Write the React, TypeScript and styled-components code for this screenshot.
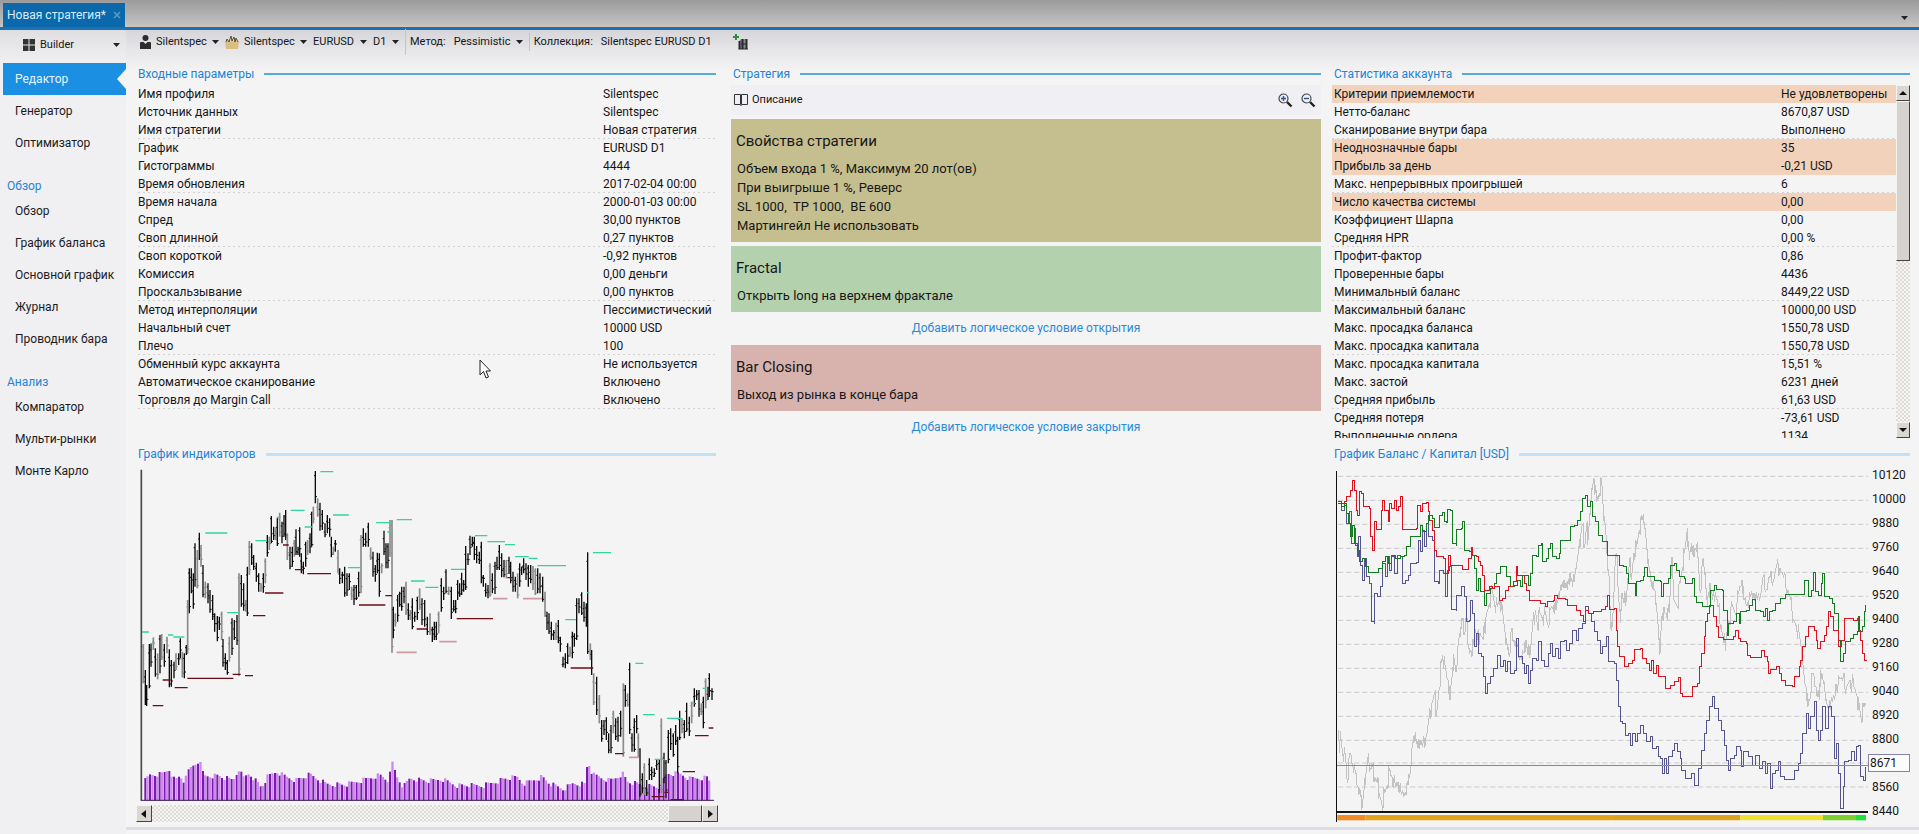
import React from "react";
import styled, { createGlobalStyle } from "styled-components";

const GlobalStyle = createGlobalStyle`
  *, *::before, *::after { box-sizing: border-box; }
  html, body { margin: 0; padding: 0; }
  body {
    background: #f4f4f5;
    color: #161616;
    font-family: Roboto, "Open Sans", sans-serif;
    font-size: 12px;
    line-height: 18px;
  }
  button, select { font: inherit; color: inherit; }
`;

/* ---------- window frame ---------- */

const Page = styled.div`
  display: flex;
  flex-direction: column;
  min-height: 100vh;
`;

const TabStrip = styled.header`
  display: flex;
  justify-content: space-between;
  align-items: flex-end;
  height: 30px;
  padding: 0 11px 0 3px;
  background: linear-gradient(#9b9b9d, #c0c0c1 24px, #d3c2b8 26px);
  border-bottom: 3px solid #1a71b4;
`;

const Tab = styled.div`
  display: flex;
  align-items: center;
  justify-content: space-between;
  width: 122px;
  height: 24px;
  padding: 0 4px;
  background: #0b68ab;
  color: #d6ecfa;
`;

const TabClose = styled.button`
  display: flex;
  padding: 0;
  border: 0;
  background: none;
  color: #5a9cc9;
`;

const StripMenu = styled.button`
  display: flex;
  padding: 0 0 7px;
  border: 0;
  background: none;
`;

const Body = styled.div`
  display: flex;
  flex: 1;
  background: linear-gradient(#d6d6da, #e6e5e8 20px, #f4f4f5 42px);
`;

const Sidebar = styled.aside`
  flex: 0 0 126px;
  padding: 2px 0 0 3px;
  background: linear-gradient(#dfdfe2, #f0eff2 34px);
`;

const Workspace = styled.div`
  flex: 1;
  min-width: 0;
  display: flex;
  flex-direction: column;
`;

/* ---------- drop-downs ---------- */

const PickerLabel = styled.label<{ $wide?: boolean }>`
  display: flex;
  align-items: center;
  gap: 5px;
  height: 26px;
  ${(p) => p.$wide && "padding: 0 6px 0 20px; margin-bottom: 5px;"}
`;

const PickerSelect = styled.select<{ $grow?: boolean }>`
  appearance: none;
  border: 0;
  padding: 0;
  background: transparent;
  outline: 0;
  font-size: 11px;
  ${(p) => p.$grow && "flex: 1; min-width: 0;"}
`;

const Caret = () => (
  <svg width="7" height="4" viewBox="0 0 7 4" aria-hidden="true">
    <path d="M0 0h7L3.500 4z" fill="#222" />
  </svg>
);

function Picker({ name, value, icon, wide }: { name: string; value: string; icon?: React.ReactNode; wide?: boolean }) {
  return (
    <PickerLabel $wide={wide}>
      {icon}
      <PickerSelect aria-label={name} defaultValue={value} $grow={wide}>
        <option>{value}</option>
      </PickerSelect>
      <Caret />
    </PickerLabel>
  );
}

/* ---------- sidebar ---------- */

const NavHeading = styled.h2`
  margin: 18px 0 0 4px;
  color: #1f84d0;
  font-size: 12px;
  font-weight: 400;
  line-height: 18px;
`;

const NavItem = styled.a<{ $active?: boolean }>`
  position: relative;
  display: flex;
  align-items: center;
  height: 32px;
  padding-left: 12px;
  text-decoration: none;
  color: ${(p) => (p.$active ? "#e4f5ff" : "#1c1c1c")};
  background: ${(p) => (p.$active ? "#1b90e3" : "transparent")};
  &::after {
    content: "";
    display: ${(p) => (p.$active ? "block" : "none")};
    position: absolute;
    right: 0;
    top: 6px;
    border: 10px solid transparent;
    border-left-width: 0;
    border-right: 9px solid #f4f4f5;
  }
`;

/* ---------- toolbar ---------- */

const Toolbar = styled.div`
  display: flex;
  align-items: center;
  gap: 6px;
  height: 24px;
  padding: 0 0 0 14px;
  font-size: 11px;
`;

const Group = styled.div`
  display: flex;
  align-items: center;
  gap: 8px;
  padding-left: 4px;
  border-left: 1px solid #c4c4c8;
`;

const AddButton = styled.button`
  display: flex;
  padding: 0;
  margin-left: 13px;
  border: 0;
  background: none;
`;

/* ---------- panels ---------- */

const Panels = styled.main`
  display: grid;
  grid-template-columns: minmax(0, 582fr) minmax(0, 590fr) minmax(0, 578fr);
  column-gap: 11px;
  padding: 9px 9px 0 12px;
  margin-bottom: 4px;
`;

const Column = styled.div<{ $inset?: boolean }>`
  position: relative;
  padding-right: ${(p) => (p.$inset ? 4 : 0)}px;
`;

const SectionTitle = styled.h3<{ $soft?: boolean; $pad?: boolean }>`
  display: flex;
  align-items: center;
  gap: 10px;
  margin: 0;
  padding-left: ${(p) => (p.$pad ? 2 : 0)}px;
  height: 22px;
  color: #1d83d4;
  font-size: 12px;
  font-weight: 400;
  white-space: nowrap;
  &::after {
    content: "";
    flex: 1;
    height: ${(p) => (p.$soft ? 3 : 2)}px;
    background: ${(p) => (p.$soft ? "#c3e1f5" : "#55aae2")};
  }
`;

const UpperArea = styled.div`
  display: flex;
  height: 358px;
  padding-bottom: 5px;
`;

const TableClip = styled.div`
  flex: 1;
  min-width: 0;
  overflow: hidden;
`;

const DataTable = styled.table`
  width: 100%;
  table-layout: fixed;
  border-collapse: collapse;
`;

const Row = styled.tr<{ $warn?: boolean; $rule?: boolean }>`
  height: 18px;
  background: ${(p) =>
    p.$warn
      ? "#f3d2bb"
      : p.$rule
        ? "repeating-linear-gradient(90deg, #d2d2d2 0 2px, transparent 2px 5px) left bottom / 100% 1px no-repeat"
        : "transparent"};
`;

const NameCell = styled.th<{ $pad?: boolean }>`
  padding: 0 0 0 ${(p) => (p.$pad ? 2 : 0)}px;
  text-align: left;
  font-weight: 400;
  line-height: 18px;
  white-space: nowrap;
`;

const ValueCell = styled.td<{ $width: number }>`
  width: ${(p) => p.$width}px;
  padding: 0;
  line-height: 18px;
  white-space: nowrap;
`;

/* ---------- scroll bars ---------- */

const ScrollBar = styled.div<{ $vertical?: boolean }>`
  display: flex;
  flex-direction: ${(p) => (p.$vertical ? "column" : "row")};
  flex: 0 0 auto;
  ${(p) => (p.$vertical ? "width: 14px;" : "height: 17px; margin: 3px -2px 0 -2px;")}
  background: repeating-conic-gradient(#dedbd5 0 25%, #f6f6f6 0 50%) 0 0 / 4px 4px;
`;

const ScrollButton = styled.button`
  display: flex;
  align-items: center;
  justify-content: center;
  flex: 0 0 16px;
  padding: 0;
  background: #dad7d2;
  border: 1px solid;
  border-color: #f4f4f4 #45433f #45433f #f4f4f4;
`;

const ScrollThumb = styled.div<{ $size: number }>`
  flex: 0 0 ${(p) => p.$size}px;
  background: #d6d2cd;
  border: 1px solid;
  border-color: #f4f4f4 #45433f #45433f #f4f4f4;
`;

const ScrollSpace = styled.div`
  flex: 1;
`;

const Arrow = ({ d }: { d: string }) => (
  <svg width="8" height="8" viewBox="0 0 8 8" aria-hidden="true">
    <path d={d} fill="#111" />
  </svg>
);

/* ---------- strategy ---------- */

const StrategyBar = styled.div`
  display: flex;
  align-items: center;
  justify-content: space-between;
  height: 30px;
  margin-bottom: 4px;
  padding: 0 5px 0 3px;
  background: #f0f0f4;
`;

const ToolButton = styled.button`
  display: flex;
  align-items: center;
  gap: 4px;
  padding: 0;
  border: 0;
  background: none;
  font-size: 11px;
`;

const ZoomGroup = styled.div`
  display: flex;
  gap: 8px;
`;

const Card = styled.section<{ $tone: string }>`
  margin-bottom: 4px;
  padding: 10px 5px 7px;
  background: ${(p) => p.$tone};
`;

const CardTitle = styled.h4`
  margin: 0 0 6px;
  font-size: 15px;
  font-weight: 400;
  line-height: 24px;
`;

const CardLine = styled.p`
  margin: 0;
  padding-left: 1px;
  font-size: 13px;
  line-height: 19px;
  white-space: pre;
`;

const AddRule = styled.a`
  display: block;
  margin-bottom: 4px;
  color: #2a8ad6;
  text-align: center;
  text-decoration: none;
  line-height: 25px;
`;

/* ---------- charts ---------- */

const Plot = styled.svg<{ $height: number }>`
  display: block;
  flex: 1;
  min-width: 0;
  width: 100%;
  height: ${(p) => p.$height}px;
`;

const ChartRow = styled.div`
  display: flex;
`;

const Scale = styled.ol`
  flex: 0 0 42px;
  margin: -2px 0 0;
  padding: 0;
  list-style: none;
`;

const Tick = styled.li<{ $current?: boolean }>`
  display: flex;
  align-items: center;
  height: ${(p) => (p.$current ? 18 : 24)}px;
  margin: ${(p) => (p.$current ? "3px 0" : "0")};
  padding-left: ${(p) => (p.$current ? 1 : 4)}px;
  background: ${(p) => (p.$current ? "#fbfbfc" : "transparent")};
  border: ${(p) => (p.$current ? "1px solid #8583a8" : "0")};
`;

const Pointer = styled.svg`
  position: absolute;
  left: 341px;
  top: 296px;
`;

const StatusLine = styled.footer`
  height: 3px;
  margin-bottom: 5px;
  background: #dddce8;
`;

/* ---------- data ---------- */

const parameters: [string, string][] = [
  ["Имя профиля", "Silentspec"],
  ["Источник данных", "Silentspec"],
  ["Имя стратегии", "Новая стратегия"],
  ["График", "EURUSD D1"],
  ["Гистограммы", "4444"],
  ["Время обновления", "2017-02-04 00:00"],
  ["Время начала", "2000-01-03 00:00"],
  ["Спред", "30,00 пунктов"],
  ["Своп длинной", "0,27 пунктов"],
  ["Своп короткой", "-0,92 пунктов"],
  ["Комиссия", "0,00 деньги"],
  ["Проскальзывание", "0,00 пунктов"],
  ["Метод интерполяции", "Пессимистический"],
  ["Начальный счет", "10000 USD"],
  ["Плечо", "100"],
  ["Обменный курс аккаунта", "Не используется"],
  ["Автоматическое сканирование", "Включено"],
  ["Торговля до Margin Call", "Включено"],
];

const statistics: [string, string, boolean?][] = [
  ["Критерии приемлемости", "Не удовлетворены", true],
  ["Нетто-баланс", "8670,87 USD"],
  ["Сканирование внутри бара", "Выполнено"],
  ["Неоднозначные бары", "35", true],
  ["Прибыль за день", "-0,21 USD", true],
  ["Макс. непрерывных проигрышей", "6"],
  ["Число качества системы", "0,00", true],
  ["Коэффициент Шарпа", "0,00"],
  ["Средняя HPR", "0,00 %"],
  ["Профит-фактор", "0,86"],
  ["Проверенные бары", "4436"],
  ["Минимальный баланс", "8449,22 USD"],
  ["Максимальный баланс", "10000,00 USD"],
  ["Макс. просадка баланса", "1550,78 USD"],
  ["Макс. просадка капитала", "1550,78 USD"],
  ["Макс. просадка капитала", "15,51 %"],
  ["Макс. застой", "6231 дней"],
  ["Средняя прибыль", "61,63 USD"],
  ["Средняя потеря", "-73,61 USD"],
  ["Выполненные ордера", "1134"],
];

const ticks = [10120, 10000, 9880, 9760, 9640, 9520, 9400, 9280, 9160, 9040, 8920, 8800, 8671, 8560, 8440];

/* Price bars as "x high low"; a trailing g marks a thin bar. */
const bars = `40 612 730g,46 690 795,50 735 798,58 612 745,63 610 680,70 592 630g,76 625 710,83 640 718g,90 585 700,95 582 660g,103 612 680,111 590 640g,118 628 742,124 660 740,132 665 715,138 640 690g,146 640 675,151 595 655,157 635 712g,163 640 715,169 615 645,173 480 640g,178 385 520,184 385 460,190 400 506,195 310 440,202 330 445g,208 278 360,213 315 380g,219 375 472,226 425 475g,234 430 490,240 450 518,248 465 540,254 520 575,262 528 604,268 530 570,275 515 600g,279 597 680,286 640 690,292 660 704,298 590 665g,306 535 645,313 540 600,321 525 615,327 400 708g,334 405 500,341 430 512,347 480 515g,352 380 528,358 303 405g,365 310 375,371 345 390,379 368 425,386 400 455,393 430 455g,400 400 458,406 355 430g,412 285 350,418 290 330g,424 228 310,431 260 300,437 262 300g,442 235 318,449 218 290g,456 245 310,462 225 290,467 210 300,472 280 360g,480 320 388,487 320 380,493 300 350g,498 268 345,504 320 345,509 262 350,514 340 400,520 365 403,527 305 380,533 300 345g,540 280 340,545 215 320,550 200 250g,556 93 190,563 175 230g,570 188 272,577 210 270,585 250 292,592 225 280,599 235 290,604 290 352,610 320 345g,616 300 335,624 330 400g,629 385 432,637 395 430,644 380 470,651 400 468,658 400 450,665 440 480g,672 435 495,679 435 480,686 395 470,693 285 460g,700 265 320,707 278 320,715 248 320,722 322 360g,729 335 410,736 375 425,742 338 400,748 340 470,755 370 400g,762 272 345,768 310 385,774 310 385,780 240 350g,786 240 638g,790 500 595,796 520 560g,803 465 545,809 455 500,815 440 512,822 440 490,828 425 525g,835 490 540,841 510 540g,847 475 568,854 515 545,862 470 540,869 445 510g,876 475 555,884 480 560,892 530 585,900 520 585g,907 560 606,913 545 600,919 545 600,926 515 580g,934 415 515,941 440 480,948 388 460,956 440 465g,964 440 537,971 480 515,977 480 520,983 420 480,989 430 470,995 398 465,1001 420 455,1007 318 450,1014 340 375,1020 287 345,1027 290 320,1033 290 360,1040 318 370,1048 335 372,1054 305 430,1060 405 440,1067 430 470,1074 435 475,1080 370 470g,1087 400 460,1095 365 462,1101 350 390,1108 315 390,1115 340 412,1122 360 412,1129 360 415g,1137 350 402,1142 365 430,1149 395 455,1156 410 455,1163 400 475g,1169 370 440,1175 380 405,1181 355 400,1188 370 420,1195 375 440,1202 375 430,1209 378 450g,1216 385 465g,1223 385 460,1230 400 460,1238 410 485,1245 455 530g,1251 515 570,1257 520 582,1264 545 600,1271 570 600,1278 548 600g,1285 540 610,1291 590 635,1299 650 682,1306 640 685,1313 610 672,1320 620 650g,1327 575 655,1333 580 620,1340 475 600,1347 475 520,1355 457 525,1362 485 545,1369 490 560,1373 337 642,1381 610 660g,1385 630 705,1391 700 795g,1400 710 825,1408 765 850g,1415 840 905,1422 840 885,1429 832 900,1436 880 940,1443 855 940,1450 812 880g,1457 835 900,1464 830 905,1472 812 890,1480 730 950g,1486 735 800,1493 760 800g,1499 668 882,1506 880 935,1513 835 935,1520 825 880,1525 880 950g,1530 925 1070,1537 1000 1060,1543 970 1065g,1550 1020 1068,1558 955 1020,1565 980 1020,1573 985 1010,1580 960 990,1588 960 1060,1594 835 1060g,1602 938 1030,1608 960 1075,1615 870 970,1622 865 930,1630 880 950,1637 855 915,1643 890 1000,1649 812 900,1656 835 880g,1663 840 895,1670 788 875,1678 830 888,1685 785 850g,1693 745 800,1700 750 780,1707 750 830,1714 790 825g,1720 770 865,1727 715 805g,1734 740 780,1738 700 770,1746 745 780`
  .split(",")
  .map((s) => {
    const [x, high, low] = s.replace("g", "").split(" ").map(Number);
    return { x, high, low, thin: s.endsWith("g") };
  });

/* Fractal levels as "from to y". */
const levels = (s: string) => s.split(",").map((p) => p.split(" ").map(Number)).map(([a, b, y]) => `M${a} ${y}H${b}`).join("");

const upFractals = levels(
  "36 57 576,60 74 611,114 130 585,130 163 591,226 292 279,291 330 518,376 410 302,440 452 232,482 524 211,524 546 261,571 610 95,609 656 225,654 694 383,738 782 248,772 786 276,800 846 239,843 884 423,886 925 442,963 1005 388,1035 1072 287,1072 1125 305,1125 1155 314,1155 1196 350,1196 1222 355,1222 1308 377,1306 1338 539,1389 1443 338,1370 1378 458,1516 1540 670,1445 1453 833,1539 1574 824,1574 1603 958,1611 1654 835,1685 1694 790,1718 1728 745",
);
const downFractals = levels(
  "68 100 797,98 122 720,134 173 743,172 310 715,308 332 703,345 369 707,369 406 527,405 460 459,459 476 315,495 520 389,532 603 401,687 766 495,766 786 467,860 892 567,980 1089 536,1132 1148 413,1322 1388 684,1455 1480 941,1695 1736 887,1658 1695 995,1736 1750 864,1565 1603 1070,1603 1615 1057,1622 1662 1079",
);
const faintFractals = levels("800 860 637,928 980 605,1089 1132 476,1179 1236 476,1497 1528 952");

const volumeKeys = "46 1020,60 1003,95 1000,118 986,135 1020,150 1005,164 1024,178 985,208 958,222 1005,265 1005,290 1014,310 1018,327 985,340 1012,358 997,395 1040,412 1010,440 993,467 1008,500 1018,540 1002,590 1030,650 1032,700 1018,748 1003,777 1020,786 962,800 1005,820 1040,840 1012,900 1022,935 1015,980 1034,1060 1035,1125 1014,1163 1010,1180 1030,1236 1008,1260 1030,1300 1045,1330 1028,1366 1030,1373 958,1388 1003,1440 1020,1480 998,1490 1022,1540 1035,1590 1040,1610 1000,1650 1000,1680 1014,1735 1010,1746 1045"
  .split(",")
  .map((s) => s.split(" ").map(Number));

function volumeTop(x: number, i: number) {
  const k = Math.max(1, volumeKeys.findIndex(([kx]) => kx >= x));
  const [x0, y0] = volumeKeys[k - 1];
  const [x1, y1] = volumeKeys[k];
  const wobble = ((i * 37) % 17) - 6;
  return Math.round(y0 + ((y1 - y0) * (x - x0)) / (x1 - x0) + wobble);
}

const volumes = Array.from({ length: 236 }, (_, i) => {
  const x = 46 + Math.round(i * 7.2);
  return { x, top: volumeTop(x, i), light: i % 2 === 1 };
});

const series = {
  red: "55 190,72 185,80 168,90 150,97 120,103 150,108 210,113 225,118 155,124 160,130 198,148 205,152 290,158 332,164 245,168 268,178 268,184 210,188 180,192 210,204 245,208 190,214 205,222 180,228 210,234 200,240 170,246 200,248 268,288 265,292 195,300 215,308 190,318 188,324 215,328 240,338 270,342 330,348 350,370 355,376 400,384 345,392 375,424 375,428 387,444 385,446 355,454 322,458 345,468 350,476 365,482 375,488 405,494 450,508 440,516 445,524 440,532 440,537 480,548 475,556 450,566 440,580 425,588 380,592 405,606 405,612 430,620 450,628 480,652 482,660 490,676 498,682 485,700 480,702 465,712 475,735 478,742 495,758 497,770 510,780 525,790 545,796 510,804 520,820 515,845 507,857 500,862 467,868 507,882 505,888 570,892 620,898 650,906 650,912 680,924 670,936 660,942 628,962 625,967 655,980 670,988 690,994 660,1000 700,1010 675,1014 710,1034 710,1036 745,1050 735,1062 725,1076 712,1082 760,1086 768,1116 768,1118 738,1132 730,1138 680,1144 640,1152 590,1156 545,1162 520,1168 495,1180 530,1190 560,1196 592,1210 597,1240 590,1246 572,1256 595,1262 605,1278 610,1282 645,1290 653,1320 653,1324 632,1332 650,1342 665,1346 700,1352 688,1370 680,1378 700,1384 722,1396 735,1418 738,1424 710,1438 680,1442 660,1448 620,1456 590,1466 560,1482 570,1488 600,1492 625,1500 605,1512 585,1518 560,1524 515,1532 530,1540 570,1556 620,1564 600,1572 535,1600 540,1612 535,1618 570,1622 600,1628 640,1634 660,1640 662",
  green: "55 185,64 200,72 190,78 220,84 250,90 290,98 255,104 310,112 330,118 365,126 355,136 380,144 398,166 398,176 385,188 365,196 350,206 370,214 345,226 355,240 350,252 345,260 320,270 290,292 288,302 255,308 275,318 250,326 225,336 235,344 262,356 262,358 225,366 218,372 245,378 248,382 208,392 210,396 310,408 315,410 268,424 265,428 243,434 330,448 335,458 345,462 385,468 450,476 415,482 455,494 495,500 460,512 445,524 430,530 400,540 380,554 380,560 410,572 440,584 435,592 420,600 440,608 405,624 435,630 400,636 345,648 350,656 315,664 310,668 365,680 355,686 325,692 310,698 348,710 355,718 340,722 300,748 300,750 258,764 255,772 240,780 215,788 175,796 165,802 200,812 185,818 230,826 245,836 285,848 305,862 345,893 345,898 375,910 378,920 400,926 430,934 430,946 465,950 425,962 420,970 410,974 383,982 410,992 408,1002 420,1020 425,1024 468,1030 430,1044 415,1050 375,1064 370,1070 390,1078 410,1092 415,1096 430,1116 415,1122 470,1130 488,1146 500,1164 498,1172 450,1184 437,1190 448,1206 450,1210 510,1222 585,1226 550,1240 545,1248 520,1258 550,1262 515,1278 510,1288 495,1298 478,1306 510,1320 515,1330 530,1336 505,1342 540,1348 515,1358 510,1366 490,1380 475,1396 463,1446 463,1452 420,1464 468,1474 450,1480 398,1486 455,1496 465,1504 430,1508 400,1514 470,1528 475,1536 490,1542 520,1552 520,1556 600,1562 665,1570 640,1576 605,1590 595,1600 582,1612 575,1614 530,1618 575,1628 560,1632 515,1635 495",
  navy: "55 185,64 210,72 195,80 250,88 215,94 310,102 265,106 315,112 350,116 290,122 375,128 420,134 355,140 410,148 430,154 545,162 550,164 460,172 470,180 440,188 370,196 410,202 350,208 390,214 350,222 400,232 345,242 350,248 430,256 420,264 405,272 370,290 368,294 300,300 335,306 270,312 320,318 250,326 290,336 300,344 425,354 430,358 390,370 400,376 470,382 390,388 380,394 508,408 510,410 465,424 440,432 470,438 545,448 540,450 480,458 520,464 620,470 580,476 640,484 650,490 710,496 760,502 730,512 710,520 685,532 645,540 680,550 660,556 695,562 665,572 700,582 690,588 595,596 650,606 670,612 700,618 675,624 730,630 690,636 655,648 660,656 605,664 660,674 680,684 640,692 610,698 650,706 625,714 655,722 605,732 600,738 630,748 610,758 570,768 600,776 565,788 550,796 500,806 520,814 545,822 575,832 600,840 640,848 620,858 590,864 665,884 670,890 720,895 800,900 845,908 850,916 885,924 880,930 915,938 880,946 905,952 880,962 855,970 880,978 905,990 890,996 925,1008 920,1014 950,1022 955,1026 1000,1032 955,1038 1000,1046 950,1056 930,1062 910,1072 935,1082 955,1084 990,1096 1015,1104 1015,1114 1000,1124 1037,1132 1037,1136 985,1144 930,1152 880,1160 840,1168 800,1176 768,1184 805,1194 840,1204 870,1212 915,1218 960,1224 990,1232 955,1242 945,1250 920,1262 930,1264 980,1270 935,1284 950,1296 975,1306 945,1318 985,1326 965,1336 1000,1342 970,1350 1045,1356 1000,1366 990,1374 965,1380 1010,1394 1018,1418 1018,1424 990,1434 970,1440 940,1448 880,1458 820,1464 865,1472 830,1482 785,1488 870,1494 900,1500 870,1508 800,1516 865,1526 800,1534 830,1542 955,1548 910,1554 1000,1562 1105,1570 1040,1574 965,1586 960,1594 935,1604 960,1610 920,1616 915,1622 1010,1630 1020,1635 980",
  gray: "55 870,58 920,62 890,68 935,76 950,82 1025,90 940,98 970,106 1000,114 1040,122 1070,126 1105,132 1050,138 1000,144 950,150 985,158 980,164 1010,172 1030,178 1060,186 1095,194 1060,202 1035,208 990,216 1010,226 1040,234 1025,244 1065,256 1055,264 1035,272 980,278 920,286 875,292 925,300 900,308 920,318 890,326 850,336 790,344 760,350 820,358 740,364 670,368 645,376 690,384 720,390 780,398 680,402 655,408 695,416 610,422 560,428 540,434 580,440 530,446 620,456 650,464 560,472 600,480 580,490 600,498 530,508 490,516 450,524 490,532 500,540 480,548 520,556 580,562 630,570 640,574 570,582 600,592 620,600 650,612 640,618 600,624 645,632 620,638 560,646 510,652 555,660 520,668 535,676 520,684 555,692 510,700 495,708 510,716 460,724 450,732 420,742 450,750 400,758 440,766 390,776 340,782 280,788 255,794 320,800 260,804 300,810 220,816 150,822 115,830 185,838 160,844 120,850 200,856 270,862 350,868 430,872 560,878 560,884 380,890 340,894 440,902 550,906 460,912 490,920 460,928 370,936 400,942 340,950 320,958 270,966 240,971 222,976 290,982 330,988 400,994 420,1002 450,1010 490,1016 600,1020 640,1024 560,1032 500,1042 540,1050 470,1056 350,1062 480,1072 500,1080 430,1088 380,1094 340,1102 265,1108 360,1114 310,1122 350,1132 305,1136 400,1142 460,1148 360,1156 400,1162 500,1170 430,1178 480,1186 455,1194 500,1204 560,1212 610,1218 600,1226 540,1238 500,1246 520,1256 460,1266 420,1272 480,1282 490,1292 470,1302 460,1312 480,1322 460,1330 410,1338 450,1350 410,1360 420,1370 380,1380 385,1390 410,1404 450,1412 480,1420 540,1430 560,1438 590,1444 620,1450 700,1458 740,1464 800,1472 760,1478 700,1488 740,1498 780,1502 690,1510 730,1520 780,1526 820,1534 770,1544 780,1556 710,1568 720,1580 740,1590 720,1602 740,1612 770,1618 810,1624 835,1630 800,1636 788",
};

const points = (s: string) => s.split(",").map((p) => p.split(" ").map(Number));

/* Equity moves in steps: hold the level, then jump. */
const stepped = (s: string) =>
  points(s)
    .map(([x, y], i) => (i ? `H${x}V${y}` : `M${x} ${y}`))
    .join("");

/* The price line gets a small swing between its turning points. */
const ragged = (s: string) => {
  const p = points(s);
  return p
    .map(([x, y], i) => {
      if (!i) return `M${x} ${y}`;
      const [px, py] = p[i - 1];
      const swing = ((i * 29) % 61) - 30;
      return `L${px + (x - px) / 3} ${py + (y - py) / 3 + swing}L${px + ((x - px) * 2) / 3} ${py + ((y - py) * 2) / 3 - swing}L${x} ${y}`;
    })
    .join("");
};

/* ---------- icons ---------- */

const GridIcon = () => (
  <svg width="12" height="12" viewBox="0 0 12 12" fill="#333" aria-hidden="true">
    <path d="M0 0h5.500v5.500H0zM6.500 0H12v5.500H6.500zM0 6.500h5.500V12H0zM6.500 6.500H12V12H6.500z" />
  </svg>
);

const PersonIcon = () => (
  <svg width="11" height="14" viewBox="0 0 11 14" fill="#2c2c2e" aria-hidden="true">
    <circle cx="5.500" cy="3" r="3" />
    <path d="M0 14V8q0-1 1-1h2.500l2 2 2-2H10q1 0 1 1v6z" />
  </svg>
);

const CrownIcon = () => (
  <svg width="14" height="15" viewBox="0 0 14 15" aria-hidden="true">
    <path d="M1 14L0 6l2 1 1-3 2 3 2-4 2 4 2-3 1 3 2-1-1 8z" fill="#d9bd83" />
    <path d="M1 7l1-3 2 3 2-6 1 5 2-4 1 5 1-4 2 4" fill="none" stroke="#5b4f36" strokeWidth="1" />
  </svg>
);

const AddCollectionIcon = () => (
  <svg width="15" height="16" viewBox="0 0 15 16" aria-hidden="true">
    <path d="M2 0h2v2h2v2H4v2H2V4H0V2h2z" fill="#2f8b3c" />
    <path d="M8 5h6v10H6V7z" fill="#8a8a8c" />
    <path d="M6.500 7v8M9.500 5v10M13.500 5v10" stroke="#2b2b2d" strokeWidth="2" fill="none" />
    <path d="M5.500 15H15M8 10h5" stroke="#2b2b2d" fill="none" />
  </svg>
);

const BookIcon = () => (
  <svg width="14" height="12" viewBox="0 0 14 12" fill="none" stroke="#333" aria-hidden="true">
    <path d="M.5.500h6v10h-6zM7.500.500h6v10h-6zM6.500 11.500h1" />
  </svg>
);

const LensIcon = ({ plus }: { plus?: boolean }) => (
  <svg width="15" height="15" viewBox="0 0 15 15" fill="none" aria-hidden="true">
    <circle cx="5.500" cy="5.500" r="4.500" stroke="#444" strokeWidth="1.200" />
    <path d="M9 9l4.500 4.500" stroke="#222" strokeWidth="2.400" />
    <path d={plus ? "M3 5.500h5M5.500 3v5" : "M3 5.500h5"} stroke="#24548c" strokeWidth="1.400" />
  </svg>
);

/* ---------- chart components ---------- */

function IndicatorChart() {
  return (
    <Plot $height={337} viewBox="24 75 1734 1011" preserveAspectRatio="none" role="img" aria-label="График индикаторов">
      {volumes.map((v) => (
        <rect key={v.x} x={v.light ? v.x - 4 : v.x - 3} y={v.top} width={v.light ? 7 : 6} height={1081 - v.top} fill={v.light ? "#cf8aef" : "#7d18ad"} />
      ))}
      {bars.map((b, i) => (
        <g key={b.x} stroke={b.thin ? "#8b8b8b" : "#0c0c0c"}>
          <path d={`M${b.x} ${b.high}V${b.low}`} strokeWidth={b.thin ? 5 : 4} />
          <path d={`M${b.x - 4} ${b.high + ((i * 13) % 20) + 8}h4M${b.x} ${b.low - ((i * 7) % 20) - 6}h5`} strokeWidth="3" />
        </g>
      ))}
      <path d={upFractals} stroke="#35d39c" strokeWidth="4" />
      <path d={downFractals} stroke="#6d0c14" strokeWidth="4" />
      <path d={faintFractals} stroke="#cc9aa2" strokeWidth="5" />
      <path d="M34 89V1081" stroke="#4a4a4c" strokeWidth="5" />
      <path d="M32 1081H1752" stroke="#3a1a50" strokeWidth="3" />
    </Plot>
  );
}

function BalanceChart() {
  return (
    <Plot $height={357} viewBox="36 75 1608 1071" preserveAspectRatio="none" role="img" aria-label="График Баланс / Капитал">
      {ticks.slice(0, -1).map((t, i) => (
        <path key={t} d={`M54 ${109 + i * 72 - (i > 11 ? 4 : 0)}H1644`} stroke="#cdcdcd" strokeWidth="3" strokeDasharray="16 8" />
      ))}
      <g fill="none" shapeRendering="crispEdges">
        <path d={ragged(series.gray)} stroke="#c3c3c3" strokeWidth="3" />
        <path d={stepped(series.navy)} stroke="#55548c" strokeWidth="3" />
        <path d={stepped(series.green)} stroke="#127a20" strokeWidth="3" />
        <path d={stepped(series.red)} stroke="#dc1220" strokeWidth="3" />
        <path d="M50 976H1644" stroke="#8583a8" strokeWidth="3" />
        <path d="M49 93V1145" stroke="#111" strokeWidth="4" />
        <path d="M49 1116H1644" stroke="#111" strokeWidth="4" />
      </g>
      <path d="M52 1125h85v16H52z" fill="#ef8a24" />
      <path d="M137 1125h748v16H137z" fill="#e3a41b" />
      <path d="M885 1125h376v16H885z" fill="#dba21c" />
      <path d="M1261 1125h248v16h-248z" fill="#f1e02f" />
      <path d="M1509 1125h99v16h-99z" fill="#7fd02a" />
      <path d="M1608 1125h30v16h-30z" fill="#1fe23a" />
    </Plot>
  );
}

export default function App() {
  return (
    <Page>
      <GlobalStyle />
      <TabStrip>
        <Tab>
          Новая стратегия*
          <TabClose aria-label="Закрыть">
            <svg width="8" height="8" viewBox="0 0 8 8" aria-hidden="true">
              <path d="M1 1l6 6M7 1L1 7" stroke="currentColor" strokeWidth="1.500" />
            </svg>
          </TabClose>
        </Tab>
        <StripMenu aria-label="Вкладки">
          <Caret />
        </StripMenu>
      </TabStrip>
      <Body>
        <Sidebar>
          <Picker name="Режим" value="Builder" icon={<GridIcon />} wide />
          <nav>
            <NavItem href="#editor" $active>Редактор</NavItem>
            <NavItem href="#generator">Генератор</NavItem>
            <NavItem href="#optimizer">Оптимизатор</NavItem>
            <NavHeading>Обзор</NavHeading>
            <NavItem href="#overview">Обзор</NavItem>
            <NavItem href="#balance">График баланса</NavItem>
            <NavItem href="#chart">Основной график</NavItem>
            <NavItem href="#journal">Журнал</NavItem>
            <NavItem href="#bars">Проводник бара</NavItem>
            <NavHeading>Анализ</NavHeading>
            <NavItem href="#comparator">Компаратор</NavItem>
            <NavItem href="#markets">Мульти-рынки</NavItem>
            <NavItem href="#montecarlo">Монте Карло</NavItem>
          </nav>
        </Sidebar>
        <Workspace>
          <Toolbar>
            <Picker name="Профиль" value="Silentspec" icon={<PersonIcon />} />
            <Picker name="Источник данных" value="Silentspec" icon={<CrownIcon />} />
            <Picker name="Символ" value="EURUSD" />
            <Picker name="Период" value="D1" />
            <Group>
              <span>Метод:</span>
              <Picker name="Метод" value="Pessimistic" />
            </Group>
            <Group>
              <span>Коллекция:</span>
              <span>Silentspec EURUSD D1</span>
              <AddButton aria-label="Добавить в коллекцию">
                <AddCollectionIcon />
              </AddButton>
            </Group>
          </Toolbar>
          <Panels>
            <Column $inset>
              <SectionTitle>Входные параметры</SectionTitle>
              <UpperArea>
                <TableClip>
                  <DataTable>
                    <tbody>
                      {parameters.map(([name, value], i) => (
                        <Row key={name} $rule={i % 3 === 2}>
                          <NameCell scope="row">{name}</NameCell>
                          <ValueCell $width={113}>{value}</ValueCell>
                        </Row>
                      ))}
                    </tbody>
                  </DataTable>
                </TableClip>
              </UpperArea>
              <SectionTitle $soft>График индикаторов</SectionTitle>
              <IndicatorChart />
              <ScrollBar>
                <ScrollButton aria-label="Влево"><Arrow d="M6 0v8L1 4z" /></ScrollButton>
                <ScrollSpace />
                <ScrollThumb $size={34} />
                <ScrollButton aria-label="Вправо"><Arrow d="M2 0v8l5-4z" /></ScrollButton>
              </ScrollBar>
              <Pointer width="12" height="20" viewBox="0 0 12 20" aria-hidden="true">
                <path d="M1 1v15l3.500-3.500L7 19l2.500-1L7 12h4.500z" fill="#fff" stroke="#222" />
              </Pointer>
            </Column>
            <Column>
              <SectionTitle $pad>Стратегия</SectionTitle>
              <StrategyBar>
                <ToolButton><BookIcon />Описание</ToolButton>
                <ZoomGroup>
                  <ToolButton aria-label="Увеличить"><LensIcon plus /></ToolButton>
                  <ToolButton aria-label="Уменьшить"><LensIcon /></ToolButton>
                </ZoomGroup>
              </StrategyBar>
              <Card $tone="#c5bf8f">
                <CardTitle>Свойства стратегии</CardTitle>
                <CardLine>Объем входа 1 %, Максимум 20 лот(ов)</CardLine>
                <CardLine>При выигрыше 1 %, Реверс</CardLine>
                <CardLine>SL 1000,  TP 1000,  BE 600</CardLine>
                <CardLine>Мартингейл Не использовать</CardLine>
              </Card>
              <Card $tone="#b4d1ae">
                <CardTitle>Fractal</CardTitle>
                <CardLine>Открыть long на верхнем фрактале</CardLine>
              </Card>
              <AddRule href="#open">Добавить логическое условие открытия</AddRule>
              <Card $tone="#d8b3ad">
                <CardTitle>Bar Closing</CardTitle>
                <CardLine>Выход из рынка в конце бара</CardLine>
              </Card>
              <AddRule href="#close">Добавить логическое условие закрытия</AddRule>
            </Column>
            <Column>
              <SectionTitle $pad>Статистика аккаунта</SectionTitle>
              <UpperArea>
                <TableClip>
                  <DataTable>
                    <tbody>
                      {statistics.map(([name, value, warn], i) => (
                        <Row key={i} $warn={warn} $rule={i % 3 === 2}>
                          <NameCell scope="row" $pad>{name}</NameCell>
                          <ValueCell $width={115}>{value}</ValueCell>
                        </Row>
                      ))}
                    </tbody>
                  </DataTable>
                </TableClip>
                <ScrollBar $vertical>
                  <ScrollButton aria-label="Вверх"><Arrow d="M0 6h8L4 2z" /></ScrollButton>
                  <ScrollThumb $size={160} />
                  <ScrollSpace />
                  <ScrollButton aria-label="Вниз"><Arrow d="M0 2h8L4 6z" /></ScrollButton>
                </ScrollBar>
              </UpperArea>
              <SectionTitle $soft $pad>График Баланс / Капитал [USD]</SectionTitle>
              <ChartRow>
                <BalanceChart />
                <Scale>
                  {ticks.map((t) => (
                    <Tick key={t} $current={t === 8671}>{t}</Tick>
                  ))}
                </Scale>
              </ChartRow>
            </Column>
          </Panels>
          <StatusLine />
        </Workspace>
      </Body>
    </Page>
  );
}
